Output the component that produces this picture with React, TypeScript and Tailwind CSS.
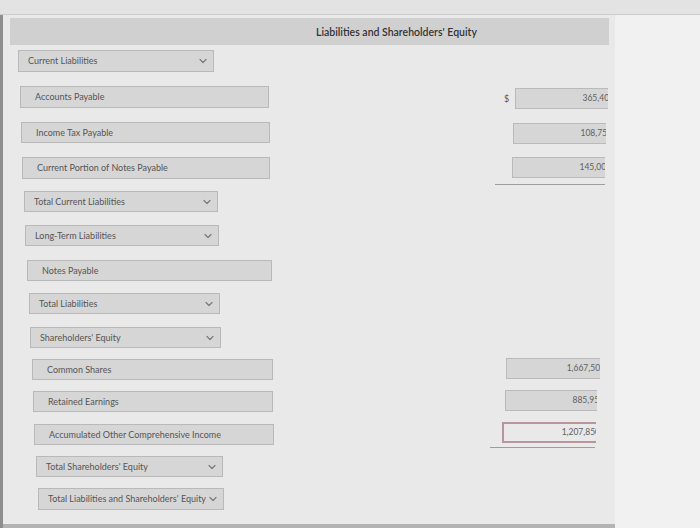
import React from "react";

type Row = {
  label: string;
  kind: "dd" | "in";
  row: string;
  box: string;
  value?: string;
  dollar?: boolean;
  vwrap?: string;
  red?: boolean;
};

const rows: Row[] = [
  { label: "Current Liabilities", kind: "dd", row: "mt-[5px] h-[22px]", box: "ml-[15px] w-[196px]" },
  { label: "Accounts Payable", kind: "in", row: "mt-[14px] h-[22px]", box: "ml-[17px] w-[249px]", value: "365,400", dollar: true, vwrap: "mt-[2px] mr-[7px] w-[108px]" },
  { label: "Income Tax Payable", kind: "in", row: "mt-[14px] h-[21px]", box: "ml-[18px] w-[249px]", value: "108,750", vwrap: "mt-[1px] mr-[9px] w-[108px]" },
  { label: "Current Portion of Notes Payable", kind: "in", row: "mt-[14px] h-[22px]", box: "ml-[19px] w-[248px]", value: "145,000", vwrap: "mt-[0px] mr-[10px] w-[108px]" },
];

const rows2: Row[] = [
  { label: "Total Current Liabilities", kind: "dd", row: "mt-[6px] h-[21px]", box: "ml-[21px] w-[194px]" },
  { label: "Long-Term Liabilities", kind: "dd", row: "mt-[13px] h-[21px]", box: "ml-[22px] w-[194px]" },
  { label: "Notes Payable", kind: "in", row: "mt-[14px] h-[21px]", box: "ml-[24px] w-[245px]" },
  { label: "Total Liabilities", kind: "dd", row: "mt-[12px] h-[21px]", box: "ml-[26px] w-[191px]" },
  { label: "Shareholders' Equity", kind: "dd", row: "mt-[13px] h-[21px]", box: "ml-[27px] w-[191px]" },
  { label: "Common Shares", kind: "in", row: "mt-[11px] h-[21px]", box: "ml-[29px] w-[241px]", value: "1,667,500", vwrap: "-mt-[1px] mr-[15px] w-[109px]" },
  { label: "Retained Earnings", kind: "in", row: "mt-[11px] h-[21px]", box: "ml-[30px] w-[240px]", value: "885,950", vwrap: "-mt-[1px] mr-[18px] w-[107px]" },
  { label: "Accumulated Other Comprehensive Income", kind: "in", row: "mt-[12px] h-[21px]", box: "ml-[31px] w-[240px]", value: "1,207,850", vwrap: "-mt-[2px] mr-[19px] w-[109px]", red: true },
];

const rows3: Row[] = [
  { label: "Total Shareholders' Equity", kind: "dd", row: "mt-[8px] h-[21px]", box: "ml-[33px] w-[187px]" },
  { label: "Total Liabilities and Shareholders' Equity", kind: "dd", row: "mt-[11px] h-[22px]", box: "ml-[35px] w-[186px]" },
];

function Chevron() {
  return (
    <svg width="8" height="6" viewBox="0 0 8 6" className="shrink-0">
      <polyline points="1,1.5 4,4.5 7,1.5" fill="none" stroke="#7a7a7a" strokeWidth="1.2" strokeLinecap="round" strokeLinejoin="round" />
    </svg>
  );
}

function RowView({ r }: { r: Row }) {
  return (
    <div className={`flex items-start shrink-0 ${r.row}`}>
      <div
        className={`h-full shrink-0 flex items-center bg-[#d6d6d6] border border-[#b9b9b9] text-[#555555] text-[9px] ${r.box} ${
          r.kind === "dd" ? "pl-[9px] pr-[6px] justify-between" : "pl-[14px]"
        }`}
      >
        <span className="whitespace-nowrap">{r.label}</span>
        {r.kind === "dd" && <Chevron />}
      </div>
      {r.value && (
        <div className={`ml-auto shrink-0 overflow-hidden flex items-center ${r.vwrap}`}>
          <span className="w-[15px] shrink-0 pl-[4px] text-[9px] text-[#555]">{r.dollar ? "$" : ""}</span>
          <div
            className={`shrink-0 w-[104px] h-[21px] flex items-center justify-end pr-[4px] text-[8.5px] text-[#616161] ${
              r.red ? "bg-[#e9e9e9] border-2 border-[#b8959c]" : "bg-[#d6d6d6] border border-[#bababa]"
            }`}
          >
            {r.value}
          </div>
        </div>
      )}
    </div>
  );
}

export default function App() {
  return (
    <div
      className="w-[700px] h-[528px] overflow-hidden flex flex-col bg-[#f1f1f1]"
      style={{ fontFamily: "Lato, 'Open Sans', Arial, sans-serif" }}
    >
      <div className="h-[15px] shrink-0 bg-[#e3e3e3] border-b border-[#cdcdcd]" />
      <div className="flex flex-1 min-h-0">
        <div className="w-[3px] shrink-0 bg-[#8e8e8e]" />
        <div className="w-[612px] shrink-0 flex flex-col bg-[#e9e9e9] overflow-hidden relative">
          <div className="mt-[3px] ml-[7px] w-[599px] h-[27px] shrink-0 bg-[#d0d0d0] flex items-center pl-[306px] pt-[2px]">
            <span className="text-[10.5px] font-semibold text-[#333333] whitespace-nowrap">
              Liabilities and Shareholders' Equity
            </span>
          </div>
          {rows.map((r) => (
            <RowView key={r.label} r={r} />
          ))}
          <div className="mt-[5px] ml-[492px] w-[110px] h-px shrink-0 bg-[#9d9d9d]" />
          {rows2.map((r) => (
            <RowView key={r.label} r={r} />
          ))}
          <div className="mt-[2px] ml-[487px] w-[105px] h-px shrink-0 bg-[#9d9d9d]" />
          {rows3.map((r) => (
            <RowView key={r.label} r={r} />
          ))}
          <div className="mt-auto h-[4px] shrink-0 bg-[#b3b3b3]" />
        </div>
        <div className="flex-1 bg-[#f1f1f1]" />
      </div>
    </div>
  );
}
